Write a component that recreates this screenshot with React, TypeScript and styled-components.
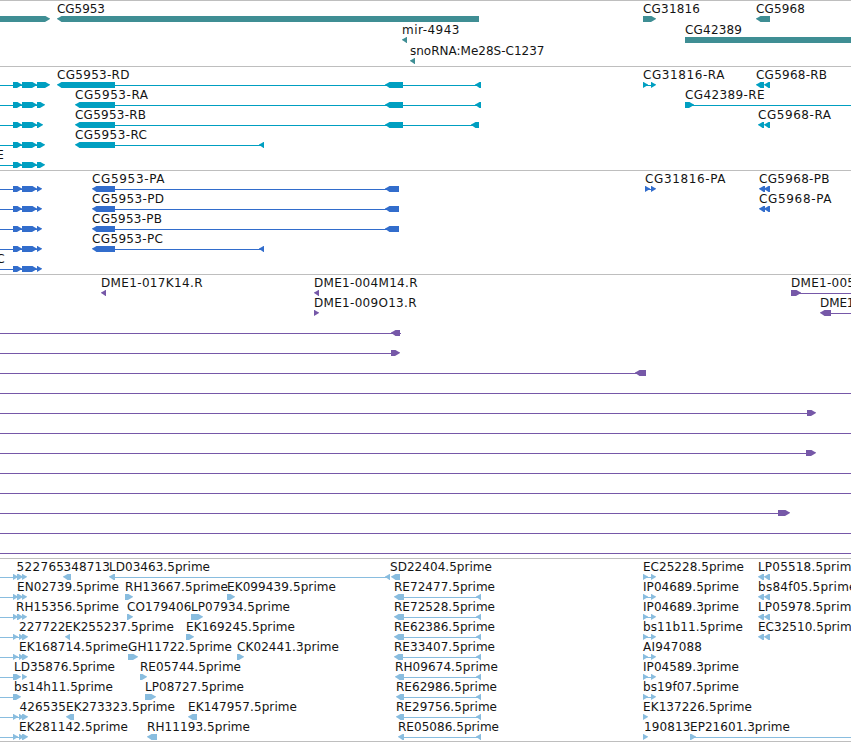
import React from "react";
import styled, { createGlobalStyle } from "styled-components";

const GlobalStyle = createGlobalStyle`
  html, body { margin: 0; padding: 0; background: #fff; overflow: hidden; }
`;

const Browser = styled.main`
  display: flex;
  flex-direction: column;
  width: 851px;
  height: 742px;
  overflow: hidden;
  background: #fff;
`;

const TrackPanel = styled.section<{ $height: number }>`
  box-sizing: border-box;
  flex: none;
  display: flex;
  flex-direction: column;
  height: ${(p) => p.$height}px;
  border-top: 1px solid #bebebe;
`;

const LaneCanvas = styled.svg<{ $height: number; $color: string }>`
  display: block;
  flex: none;
  width: 851px;
  height: ${(p) => p.$height}px;
  overflow: visible;
  color: ${(p) => p.$color};
  fill: currentColor;
`;

const FeatureName = styled.text`
  font-family: "DejaVu Sans", "Noto Sans", sans-serif;
  font-size: 12px;
  fill: #141414;
`;

type Label = [text: string, start: number, end: number];
type Box = [dir: "<" | ">" | "=", start: number, end: number];
type Line = [start: number, end: number];
interface LaneData {
  labels?: Label[];
  lines?: Line[];
  boxes?: Box[];
}
interface TrackData {
  color: string;
  height: number;
  pitch: number;
  lanes: LaneData[];
}

const END = 860;

function outline([dir, a, b]: Box): string {
  if (dir === "=") return `M${a} 15H${b}V21H${a}Z`;
  const h = Math.min(5, b - a);
  if (dir === "<")
    return `M${b} 15H${a + h - 0.5}L${a + h * 0.4} 16.4L${a} 17.6V18.1L${a + h * 0.4} 19.3L${a + h - 0.5} 21H${b}Z`;
  return `M${a} 15H${b - h + 0.5}L${b - h * 0.4} 16.5L${b} 17.6V18.1L${b - h * 0.4} 19.2L${b - h} 21H${a}Z`;
}

function Lane({ lane, pitch, color }: { lane: LaneData; pitch: number; color: string }) {
  return (
    <LaneCanvas $height={pitch} $color={color}>
      {lane.lines?.map(([a, b], i) => (
        <rect key={i} x={a} y={18} width={b - a} height={1} />
      ))}
      {lane.boxes?.map((box, i) => (
        <path key={i} d={outline(box)} />
      ))}
      {lane.labels?.map(([text, a, b]) => (
        <FeatureName key={text} x={a - 0.5} y={12} textLength={b - a + 1}>
          {text}
        </FeatureName>
      ))}
    </LaneCanvas>
  );
}

const geneLanes: LaneData[] = [
  {
    labels: [["CG5953", 57.5, 104.5], ["CG31816", 643.5, 699.5], ["CG5968", 756.5, 804.5]],
    boxes: [[">", -10, 50], ["<", 57, 479], [">", 643, 656], ["<", 756, 770]],
  },
  {
    labels: [["mir-4943", 402.5, 459], ["CG42389", 685.5, 741.5]],
    boxes: [["<", 402, 407], ["=", 685, END]],
  },
  { labels: [["snoRNA:Me28S-C1237", 410.5, 544]], boxes: [["<", 410, 415]] },
];

const leftExons = (end: number): Box[] => [[">", 13, 22], [">", 22, 37], [">", 37, end]];

const transcriptLanes: LaneData[] = [
  {
    labels: [["CG5953-RD", 57.5, 129], ["CG31816-RA", 643.5, 724], ["CG5968-RB", 756.5, 826.5]],
    lines: [[0, 40], [115, 478], [646, 653]],
    boxes: [...leftExons(50), ["<", 57, 115], ["<", 385, 403], ["<", 475, 481], [">", 643, 648], [">", 651, 656], ["<", 756, 764], ["<", 764, 770]],
  },
  {
    labels: [["CG5953-RA", 75.5, 147.5], ["CG42389-RE", 685.5, 764]],
    lines: [[0, 40], [115, 478], [690, END]],
    boxes: [...leftExons(45), ["<", 75, 115], ["<", 385, 403], ["<", 475, 481], [">", 685, 694]],
  },
  {
    labels: [["CG5953-RB", 75.5, 145.5], ["CG5968-RA", 758.5, 830.5]],
    lines: [[0, 40], [115, 474]],
    boxes: [...leftExons(43), ["<", 75, 115], ["<", 385, 403], ["<", 471, 479], ["<", 758, 764], ["<", 764, 770]],
  },
  {
    labels: [["CG5953-RC", 75.5, 146.5]],
    lines: [[0, 40], [115, 262]],
    boxes: [...leftExons(45), ["<", 75, 115], ["<", 259, 264]],
  },
  { labels: [["E", -3.2, 3.4]], lines: [[0, 40]], boxes: leftExons(45) },
];

const proteinLanes: LaneData[] = [
  {
    labels: [["CG5953-PA", 92.5, 164], ["CG31816-PA", 645.5, 725], ["CG5968-PB", 759.5, 829]],
    lines: [[0, 40], [115, 388], [647, 653]],
    boxes: [...leftExons(42), ["<", 92, 115], ["<", 385, 399], [">", 645, 650], [">", 651, 656], ["<", 759, 765], ["<", 764, 770]],
  },
  {
    labels: [["CG5953-PD", 92.5, 163.5], ["CG5968-PA", 759.5, 831]],
    lines: [[0, 40], [115, 388]],
    boxes: [...leftExons(42), ["<", 92, 115], ["<", 385, 399], ["<", 759, 765], ["<", 764, 770]],
  },
  {
    labels: [["CG5953-PB", 92.5, 161.5]],
    lines: [[0, 40], [115, 388]],
    boxes: [...leftExons(42), ["<", 92, 115], ["<", 385, 399]],
  },
  {
    labels: [["CG5953-PC", 92.5, 162.5]],
    lines: [[0, 40], [115, 262]],
    boxes: [...leftExons(42), ["<", 92, 115], ["<", 259, 264]],
  },
  { labels: [["C", -3.2, 4.2]], lines: [[0, 40]], boxes: leftExons(42) },
];

const fullLine: LaneData = { lines: [[0, END]] };

const cloneLanes: LaneData[] = [
  {
    labels: [["DME1-017K14.R", 101.5, 202], ["DME1-004M14.R", 314.5, 417], ["DME1-005", 791.5, 854.5]],
    lines: [[798, END]],
    boxes: [["<", 101, 106], ["<", 314, 319], [">", 791, 801]],
  },
  {
    labels: [["DME1-009O13.R", 314.5, 416], ["DME1", 820.5, 854]],
    lines: [[830, END]],
    boxes: [[">", 314, 319], ["<", 820, 831]],
  },
  { lines: [[0, 401]], boxes: [["<", 391, 400]] },
  { lines: [[0, 395]], boxes: [[">", 391, 400]] },
  { lines: [[0, 640]], boxes: [["<", 635, 646]] },
  fullLine,
  { lines: [[0, 810]], boxes: [[">", 807, 816]] },
  fullLine,
  { lines: [[0, 810]], boxes: [[">", 806, 816]] },
  fullLine,
  fullLine,
  { lines: [[0, 782]], boxes: [[">", 778, 790]] },
  fullLine,
  fullLine,
];

const tripleExons: Box[] = [[">", 13, 18], [">", 17, 23], [">", 22, 27]];
const gappedExons: Box[] = [[">", 13, 18], [">", 19, 24], [">", 22, 28]];
const shortPair: Box[] = [[">", 643, 648], [">", 651, 656]];
const reversePair: Box[] = [["<", 758, 764], ["<", 764, 770]];
const spliced = (start: number, bodyEnd: number): Box[] => [["<", start, bodyEnd], ["<", 476, 481]];

const estLanes: LaneData[] = [
  {
    labels: [["522765", 17, 63.5], ["348713", 64, 109.5], ["LD03463.5prime", 109.5, 209.5], ["SD22404.5prime", 390.5, 491.5], ["EC25228.5prime", 643.5, 743.5], ["LP05518.5prime", 758.5, 858.5]],
    lines: [[0, 16], [113, 388], [646, 653]],
    boxes: [...tripleExons, ["<", 63, 71], ["<", 109, 115], ["<", 385, 390], ["<", 391, 400], ...shortPair, ...reversePair],
  },
  {
    labels: [["EN02739.5prime", 17.5, 118.5], ["RH13667.5prime", 125.5, 227.5], ["EK099439.5prime", 227.5, 335.5], ["RE72477.5prime", 394.5, 494.5], ["IP04689.5prime", 643.5, 738.5], ["bs84f05.5prime", 758.5, 856]],
    lines: [[0, 16], [400, 478], [646, 653]],
    boxes: [...tripleExons, [">", 125, 133], [">", 227, 235], ...spliced(394, 404), ...shortPair, ...reversePair],
  },
  {
    labels: [["RH15356.5prime", 16.5, 118.5], ["CO179406", 127.5, 191], ["LP07934.5prime", 191.5, 289.5], ["RE72528.5prime", 394.5, 494.5], ["IP04689.3prime", 643.5, 738.5], ["LP05978.5prime", 758.5, 858.5]],
    lines: [[0, 16], [400, 478], [646, 653]],
    boxes: [...tripleExons, [">", 127, 133], [">", 191, 203], ...spliced(394, 404), ...shortPair, ...reversePair],
  },
  {
    labels: [["227722", 19.5, 65], ["EK255237.5prime", 65.5, 173.5], ["EK169245.5prime", 186.5, 294.5], ["RE62386.5prime", 394.5, 494.5], ["bs11b11.5prime", 643.5, 742.5], ["EC32510.5prime", 758.5, 858.5]],
    lines: [[0, 20], [400, 478], [646, 653]],
    boxes: [...gappedExons, ["<", 65, 70], [">", 186, 194], ...spliced(394, 404), ...shortPair, ...reversePair],
  },
  {
    labels: [["EK168714.5prime", 19.5, 127.5], ["GH11722.5prime", 128.5, 231.5], ["CK02441.3prime", 237.5, 338.5], ["RE33407.5prime", 394.5, 494.5], ["AI947088", 643.5, 701.5]],
    lines: [[0, 20], [400, 478], [646, 653]],
    boxes: [...gappedExons, [">", 128, 138], [">", 237, 244], ...spliced(394, 403), ...shortPair],
  },
  {
    labels: [["LD35876.5prime", 14.5, 114.5], ["RE05744.5prime", 140.5, 240.5], ["RH09674.5prime", 395.5, 497.5], ["IP04589.3prime", 643.5, 738.5]],
    lines: [[0, 16], [400, 478], [646, 653]],
    boxes: [[">", 13, 21], [">", 22, 27], [">", 140, 147], ...spliced(395, 404), ...shortPair],
  },
  {
    labels: [["bs14h11.5prime", 14.5, 112.5], ["LP08727.5prime", 145.5, 243.5], ["RE62986.5prime", 396.5, 496.5], ["bs19f07.5prime", 643.5, 738.5]],
    lines: [[0, 16], [400, 478], [646, 653]],
    boxes: [[">", 13, 21], [">", 145, 156], ...spliced(396, 404), ...shortPair],
  },
  {
    labels: [["426535", 20, 65.5], ["EK273323.5prime", 66.5, 174.5], ["EK147957.5prime", 188.5, 296.5], ["RE29756.5prime", 396.5, 496.5], ["EK137226.5prime", 643.5, 751.5]],
    lines: [[0, 20], [400, 478]],
    boxes: [...gappedExons, ["<", 66, 74], ["<", 188, 197], ...spliced(396, 404), [">", 643, 648]],
  },
  {
    labels: [["EK281142.5prime", 19.5, 127.5], ["RH11193.5prime", 147.5, 249.5], ["RE05086.5prime", 398.5, 498.5], ["190813", 644.5, 690], ["EP21601.3prime", 690.5, 789.5]],
    lines: [[0, 20], [400, 478], [693, END]],
    boxes: [...gappedExons, ["<", 147, 157], ...spliced(398, 404), [">", 643, 648], [">", 690, 696]],
  },
];

const tracks: TrackData[] = [
  { color: "#3f8e94", height: 66, pitch: 21, lanes: geneLanes },
  { color: "#009fc1", height: 104, pitch: 20, lanes: transcriptLanes },
  { color: "#326dcc", height: 104, pitch: 20, lanes: proteinLanes },
  { color: "#7658a8", height: 284, pitch: 20, lanes: cloneLanes },
  { color: "#89bddf", height: 183, pitch: 20, lanes: estLanes },
  { color: "#000000", height: 1, pitch: 20, lanes: [] },
];

export default function App() {
  return (
    <>
      <GlobalStyle />
      <Browser>
        {tracks.map((track, t) => (
          <TrackPanel key={t} $height={track.height}>
            {track.lanes.map((lane, i) => (
              <Lane key={i} lane={lane} pitch={track.pitch} color={track.color} />
            ))}
          </TrackPanel>
        ))}
      </Browser>
    </>
  );
}
